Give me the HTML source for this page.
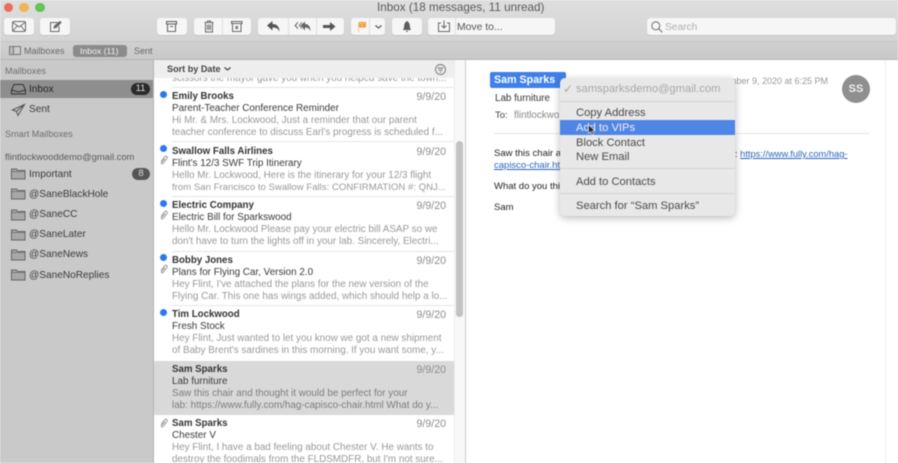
<!DOCTYPE html>
<html><head><meta charset="utf-8">
<style>
html,body{margin:0;padding:0;width:898px;height:463px;overflow:hidden;background:#fff}
body{font-family:"Liberation Sans",sans-serif;position:relative;color:#333}
#w{position:absolute;left:0;top:0;width:898px;height:463px;overflow:hidden;filter:blur(.4px)}
.a{position:absolute;white-space:nowrap}
.btn{position:absolute;top:18px;height:17px;background:#f6f6f6;border-radius:3px;box-shadow:0 .5px 1px rgba(0,0,0,.16)}
.div{position:absolute;top:18px;height:17px;width:1px;background:#dedede}
svg{position:absolute;overflow:visible}
.sb{font-size:10.1px;line-height:12px;color:#3a3a3a;margin-top:1px}
.hd{font-size:9.1px;line-height:12px;color:#6e6e6e}
.n{position:absolute;left:172px;margin-top:1px;font-size:9.7px;line-height:12px;font-weight:bold;color:#333;white-space:nowrap}
.s{position:absolute;left:172px;margin-top:1px;font-size:9.9px;line-height:12px;color:#3a3a3a;white-space:nowrap}
.p{position:absolute;left:172px;margin-top:1px;font-size:9.9px;line-height:12px;color:#999;white-space:nowrap}
.d{position:absolute;right:452px;margin-top:1px;font-size:10.6px;line-height:12px;color:#8c8c8c}
.sep{position:absolute;left:172px;width:282px;height:1px;background:#e6e6e6}
.dot{position:absolute;left:160px;width:7px;height:7px;border-radius:50%;background:#2f78ea}
.m{position:absolute;left:576px;font-size:11.2px;line-height:14px;color:#4a4a4a;white-space:nowrap}
.ms{position:absolute;left:560px;width:175px;height:1px;background:#d2d2d2}
.b{position:absolute;left:494px;font-size:9.5px;line-height:12px;color:#222;white-space:nowrap}
</style></head><body><div id="w">

<!-- toolbar -->
<div class="a" style="left:0;top:0;width:898px;height:41px;background:linear-gradient(#dedede,#d4d4d4)"></div>
<div class="a" style="left:0;top:41px;width:898px;height:18px;background:linear-gradient(#d0d0d0,#c9c9c9);border-top:1px solid #c4c4c4;box-sizing:border-box"></div>
<div class="a" style="left:0;top:59px;width:898px;height:1px;background:#b5b5b5"></div>
<div class="a" style="left:3.500px;top:2.700px;width:9.500px;height:9.500px;border-radius:50%;background:#ee6a5f"></div>
<div class="a" style="left:19px;top:2.700px;width:9.500px;height:9.500px;border-radius:50%;background:#f0b655"></div>
<div class="a" style="left:35px;top:2.700px;width:9.500px;height:9.500px;border-radius:50%;background:#61c454"></div>
<div class="a" style="left:377px;top:1px;font-size:11.7px;line-height:14px;color:#5a5a5a">Inbox (18 messages, 11 unread)</div>

<div class="btn" style="left:4px;width:30px"></div>
<svg style="left:12px;top:21px" width="14" height="11" fill="none" stroke="#666" stroke-width="1"><rect x=".5" y=".5" width="13" height="10" rx="1.5"/><path d="M1 1.500 7 6l6-4.500M1 10l4-5M13 10 9 5"/></svg>
<div class="btn" style="left:40px;width:30px"></div>
<svg style="left:50px;top:21px" width="12" height="11" fill="none" stroke="#666" stroke-width="1"><path d="M8 1.500H.5v9h8.500V5"/><path d="M4 7l.5-2L10 .5l1 1L6 6.500z" fill="#666"/></svg>

<div class="btn" style="left:157px;width:30px"></div>
<svg style="left:166px;top:21px" width="12" height="11" fill="none" stroke="#666" stroke-width="1.100"><rect x=".5" y=".5" width="10" height="2.500"/><path d="M1.500 3v7.500h8V3M4 5.500h3"/></svg>
<div class="btn" style="left:194px;width:57px"></div><div class="div" style="left:222px"></div>
<svg style="left:204px;top:20px" width="11" height="13" fill="none" stroke="#666" stroke-width="1"><path d="M.5 2.500h9M3.500 2.500V1h3v1.500M1.500 2.500v9.500h7V2.500"/><path d="M3.500 4.500V10M5 4.500V10M6.500 4.500V10" stroke-width=".9"/></svg>
<svg style="left:231px;top:21px" width="12" height="11" fill="none" stroke="#666" stroke-width="1"><path d="M.5.500h10.500v2H.5zM1.500 2.500v8h8.500v-8"/><path d="M4.500 5l2.500 3M7 5 4.500 8"/></svg>
<div class="btn" style="left:258px;width:86px"></div><div class="div" style="left:288px"></div><div class="div" style="left:316px"></div>
<svg style="left:267px;top:21px" width="13" height="11" fill="#555"><path d="M0 4.500 5.500 0v3C10 3 12.500 6 12.500 10.500 11 7.500 9 6.500 5.500 6.500V9.500z"/></svg>
<svg style="left:294px;top:21px" width="17" height="11" fill="#666"><path d="M4 .5.500 4.500 4 8.500V7L2 4.500 4 2z"/><path d="M8 .5 4.500 4.500 8 8.500V7L6 4.500 8 2z" opacity=".8"/><path d="M6.500 4.500 11 .5v2.500c3.500 0 5.500 3 5.500 7-1.200-2.500-3-3.500-5.500-3.500v3z"/></svg>
<svg style="left:323px;top:22px" width="13" height="9" fill="#555"><path d="M0 3h7V0l5.500 4.500L7 9V6H0z"/></svg>
<div class="btn" style="left:351px;width:34px"></div><div class="div" style="left:369px"></div>
<svg style="left:358px;top:22px" width="8" height="10"><path d="M0 0h8v5.500H1V10H0z" fill="#f2cf91"/><path d="M1 0h7v5.500H1z" fill="#ee9d3d"/><path d="M2 1h1.500v1H2zM5 1h1.500v1H5zM3.500 3H5v1H3.500z" fill="#f6e2b8"/></svg>
<svg style="left:375px;top:25px" width="7" height="4" fill="none" stroke="#555" stroke-width="1.200"><path d="M.5.500 3.500 3 6.500.5"/></svg>
<div class="btn" style="left:392px;width:30px"></div>
<svg style="left:403px;top:21px" width="8" height="12" fill="#5e5e5e"><path d="M4 0c.7 0 .9.500.9 1C6.500 1.700 6.700 3.500 6.900 5.500c.1 1.500.7 2.500 1.100 3.500H0c.4-1 1-2 1.100-3.500C1.300 3.500 1.500 1.700 3.100 1 3.100.5 3.300 0 4 0zM2.800 9.700h2.400C5 11.200 3 11.200 2.800 9.700z"/></svg>
<div class="btn" style="left:428px;width:127px"></div><div class="div" style="left:455px"></div>
<svg style="left:438px;top:20px" width="12" height="13" fill="none" stroke="#666" stroke-width="1"><path d="M3 3H.5v8.500h11V3H9M6 .5v7.500M3.500 5.500 6 8l2.500-2.500"/></svg>
<div class="a" style="left:457px;top:20px;margin-top:1px;font-size:10.400px;line-height:14px;color:#555">Move to...</div>
<div class="btn" style="left:647px;width:249px"></div>
<svg style="left:651px;top:21px" width="12" height="12" fill="none" stroke="#777" stroke-width="1.100"><circle cx="4.800" cy="4.800" r="4"/><path d="M7.800 7.800l3.500 3.500"/></svg>
<div class="a" style="left:665px;top:21px;font-size:10.200px;line-height:14px;color:#b0b0b0">Search</div>

<!-- fav bar -->
<svg style="left:9px;top:46px" width="12" height="9" fill="none" stroke="#777" stroke-width="1"><rect x=".5" y=".5" width="11" height="8"/><path d="M4.500.5v8"/><path d="M.5.500h4v8h-4z" fill="#bbb"/></svg>
<div class="a" style="left:24px;top:44.500px;font-size:9px;line-height:12px;color:#666">Mailboxes</div>
<div class="a" style="left:73px;top:44.500px;width:54px;height:12.500px;background:#8b8b8b;border-radius:3px"></div>
<div class="a" style="left:80px;top:44.500px;font-size:8.700px;line-height:12px;color:#f2f2f2">Inbox (11)</div>
<div class="a" style="left:134px;top:44.500px;font-size:9px;line-height:12px;color:#666">Sent</div>

<!-- sidebar -->
<div class="a" style="left:0;top:60px;width:154px;height:403px;background:#c9c9c9"></div>
<div class="a" style="left:153px;top:60px;width:1px;height:403px;background:#b4b4b4"></div>
<div class="a hd" style="left:5px;top:65px">Mailboxes</div>
<div class="a" style="left:0;top:80px;width:153px;height:18px;background:#8e8e8e"></div>
<svg style="left:11px;top:83px" width="15" height="12" fill="none" stroke="#333" stroke-width="1"><path d="M.5 7 3 1.500h9L14.500 7v4H.5z"/><path d="M.5 7 7.500 9l7-2"/></svg>
<div class="a sb" style="left:29px;top:83px;color:#222">Inbox</div>
<div class="a" style="left:131px;top:83px;width:19px;height:12px;border-radius:6px;background:#2a2a2a;color:#ddd;font-size:9.500px;line-height:12px;text-align:center">11</div>
<svg style="left:12px;top:104px" width="13" height="12" fill="none" stroke="#555" stroke-width="1"><path d="M12.500.5.500 6l4 1.500 1.500 4L12.500.5zM4.500 7.500 12.500.5"/></svg>
<div class="a sb" style="left:29px;top:103px">Sent</div>
<div class="a hd" style="left:5px;top:128px">Smart Mailboxes</div>
<div class="a" style="left:5px;top:151px;font-size:9.400px;line-height:12px;color:#5a5a5a">flintlockwooddemo@gmail.com</div>
<svg width="0" height="0"><defs><g id="f"><path d="M.5 2V1h5l1 1.500h7.500V11H.5z" fill="#a8a8a8" stroke="#666"/><path d="M.5 3.500H14" stroke="#666" stroke-width=".7"/></g></defs></svg>
<svg style="left:11px;top:168px" width="15" height="12"><use href="#f"/></svg>
<div class="a sb" style="left:29px;top:168px">Important</div>
<div class="a" style="left:132px;top:168px;width:18px;height:12px;border-radius:6px;background:#555;color:#ddd;font-size:9.500px;line-height:12px;text-align:center">8</div>
<svg style="left:11px;top:188px" width="15" height="12"><use href="#f"/></svg>
<div class="a sb" style="left:29px;top:188px">@SaneBlackHole</div>
<svg style="left:11px;top:209px" width="15" height="12"><use href="#f"/></svg>
<div class="a sb" style="left:29px;top:208px">@SaneCC</div>
<svg style="left:11px;top:229px" width="15" height="12"><use href="#f"/></svg>
<div class="a sb" style="left:29px;top:228px">@SaneLater</div>
<svg style="left:11px;top:249px" width="15" height="12"><use href="#f"/></svg>
<div class="a sb" style="left:29px;top:248px">@SaneNews</div>
<svg style="left:11px;top:269px" width="15" height="12"><use href="#f"/></svg>
<div class="a sb" style="left:29px;top:269px">@SaneNoReplies</div>

<!-- list -->
<div class="a" style="left:154px;top:361px;width:300px;height:54px;background:#d9d9d9"></div>
<div class="p" style="top:72px">scissors the mayor gave you when you helped save the town...</div>
<div class="a" style="left:154px;top:60px;width:300px;height:18px;background:#eeeeee"></div>
<div class="a" style="left:167px;top:63px;font-size:9.100px;line-height:12px;font-weight:bold;color:#444">Sort by Date</div>
<svg style="left:224px;top:67px" width="7" height="4" fill="none" stroke="#444" stroke-width="1.200"><path d="M.5.500 3.500 3 6.500.5"/></svg>
<svg style="left:435px;top:64px" width="11" height="11" fill="none" stroke="#777" stroke-width=".9"><circle cx="5.500" cy="5.500" r="5"/><path d="M2.500 4h6M3.500 6h4M4.800 8h1.500"/></svg>

<div class="sep" style="top:87px"></div>
<div class="dot" style="top:91px"></div>
<div class="n" style="top:90px">Emily Brooks</div><div class="d" style="top:90px">9/9/20</div>
<div class="s" style="top:102px">Parent-Teacher Conference Reminder</div>
<div class="p" style="top:114px">Hi Mr. &amp; Mrs. Lockwood, Just a reminder that our parent</div>
<div class="p" style="top:126px">teacher conference to discuss Earl's progress is scheduled f...</div>

<div class="sep" style="top:141px"></div>
<div class="dot" style="top:145px"></div>
<svg style="left:160px;top:155px" width="8" height="10" fill="none" stroke="#999" stroke-width="1"><path d="M1 6.500 5 1.500c1-1 3 .5 2 2L3 8.500c-.7.800-2.200 0-1.500-1L5 3.500"/></svg>
<div class="n" style="top:145px">Swallow Falls Airlines</div><div class="d" style="top:145px">9/9/20</div>
<div class="s" style="top:157px">Flint's 12/3 SWF Trip Itinerary</div>
<div class="p" style="top:169px">Hello Mr. Lockwood, Here is the itinerary for your 12/3 flight</div>
<div class="p" style="top:181px;font-size:9.6px">from San Francisco to Swallow Falls: CONFIRMATION #: QNJ...</div>

<div class="sep" style="top:196px"></div>
<div class="dot" style="top:200px"></div>
<svg style="left:160px;top:210px" width="8" height="10" fill="none" stroke="#999" stroke-width="1"><path d="M1 6.500 5 1.500c1-1 3 .5 2 2L3 8.500c-.7.800-2.200 0-1.500-1L5 3.500"/></svg>
<div class="n" style="top:199px">Electric Company</div><div class="d" style="top:199px">9/9/20</div>
<div class="s" style="top:211px">Electric Bill for Sparkswood</div>
<div class="p" style="top:223px">Hello Mr. Lockwood Please pay your electric bill ASAP so we</div>
<div class="p" style="top:235px">don't have to turn the lights off in your lab. Sincerely, Electri...</div>

<div class="sep" style="top:251px"></div>
<div class="dot" style="top:254px"></div>
<svg style="left:160px;top:264px" width="8" height="10" fill="none" stroke="#999" stroke-width="1"><path d="M1 6.500 5 1.500c1-1 3 .5 2 2L3 8.500c-.7.800-2.200 0-1.500-1L5 3.500"/></svg>
<div class="n" style="top:254px">Bobby Jones</div><div class="d" style="top:254px">9/9/20</div>
<div class="s" style="top:266px">Plans for Flying Car, Version 2.0</div>
<div class="p" style="top:278px">Hey Flint, I've attached the plans for the new version of the</div>
<div class="p" style="top:290px">Flying Car. This one has wings added, which should help a lo...</div>

<div class="sep" style="top:305px"></div>
<div class="dot" style="top:309px"></div>
<div class="n" style="top:308px">Tim Lockwood</div><div class="d" style="top:308px">9/9/20</div>
<div class="s" style="top:320px">Fresh Stock</div>
<div class="p" style="top:332px">Hey Flint, Just wanted to let you know we got a new shipment</div>
<div class="p" style="top:344px">of Baby Brent's sardines in this morning. If you want some, y...</div>

<div class="n" style="top:363px">Sam Sparks</div><div class="d" style="top:363px">9/9/20</div>
<div class="s" style="top:375px">Lab furniture</div>
<div class="p" style="top:387px;color:#7d7d7d">Saw this chair and thought it would be perfect for your</div>
<div class="p" style="top:399px;color:#7d7d7d">lab: https://www.fully.com/hag-capisco-chair.html What do y...</div>

<svg style="left:160px;top:418px" width="8" height="10" fill="none" stroke="#999" stroke-width="1"><path d="M1 6.500 5 1.500c1-1 3 .5 2 2L3 8.500c-.7.800-2.200 0-1.500-1L5 3.500"/></svg>
<div class="n" style="top:417px">Sam Sparks</div><div class="d" style="top:417px">9/9/20</div>
<div class="s" style="top:429px">Chester V</div>
<div class="p" style="top:441px">Hey Flint, I have a bad feeling about Chester V. He wants to</div>
<div class="p" style="top:453px">destroy the foodimals from the FLDSMDFR, but I'm not sure...</div>

<!-- scrollbar -->
<div class="a" style="left:454px;top:60px;width:11px;height:403px;background:#f8f8f8;border-left:1px solid #ececec;box-sizing:border-box"></div>
<div class="a" style="left:456px;top:141px;width:7px;height:176px;border-radius:4px;background:#c2c2c2"></div>
<div class="a" style="left:465px;top:60px;width:1px;height:403px;background:#cfcfcf"></div>
<div class="a" style="left:885px;top:60px;width:1px;height:403px;background:#f0f0f0"></div>

<!-- detail -->
<div class="a" style="left:490px;top:72px;width:76px;height:16px;background:#3f80ea;border-radius:2px"></div>
<div class="a" style="left:494px;top:73px;font-size:10.700px;line-height:14px;font-weight:bold;color:#fff">Sam Sparks</div>
<div class="a" style="left:495px;top:93px;font-size:9.800px;line-height:12px;color:#333">Lab furniture</div>
<div class="a" style="left:495px;top:110px;font-size:9.500px;line-height:12px;color:#444">To:</div>
<div class="a" style="left:514px;top:110px;font-size:9.800px;line-height:12px;color:#888">flintlockwo</div>
<div class="a" style="right:70px;top:75px;font-size:9px;line-height:12px;color:#999">ember 9, 2020 at 6:25 PM</div>
<div class="a" style="left:842px;top:75px;width:28px;height:28px;border-radius:50%;background:#8f8f8f;color:#eee;font-size:11px;font-weight:bold;line-height:28px;text-align:center">SS</div>
<div class="a" style="left:494px;top:133px;width:376px;height:1px;background:#e4e4e4"></div>
<div class="b" style="top:148px">Saw this chair a</div>
<div class="b" style="top:148px;left:735px;font-size:9.300px">: <span style="color:#2a66b8;text-decoration:underline">https://www.fully.com/hag-</span></div>
<div class="b" style="top:160px;color:#2a66b8;text-decoration:underline">capisco-chair.htm</div>
<div class="b" style="top:181px">What do you thi</div>
<div class="b" style="top:202px">Sam</div>

<!-- menu -->
<div class="a" style="left:560px;top:78px;width:175px;height:138px;background:#e8e8e8;border-radius:5px;box-shadow:0 2px 8px rgba(0,0,0,.28)"></div>
<div class="a" style="left:563px;top:82px;font-size:12px;line-height:14px;color:#aaa">✓</div>
<div class="m" style="top:82px;color:#a8a8a8">samsparksdemo@gmail.com</div>
<div class="ms" style="top:101px"></div>
<div class="m" style="top:106px">Copy Address</div>
<div class="a" style="left:560px;top:120px;width:175px;height:14.500px;background:#4f86e6"></div>
<div class="m" style="top:121px;color:#f0f0f0">Add to VIPs</div>
<div class="m" style="top:136px">Block Contact</div>
<div class="m" style="top:150px">New Email</div>
<div class="ms" style="top:168px"></div>
<div class="m" style="top:175px">Add to Contacts</div>
<div class="ms" style="top:193px"></div>
<div class="m" style="top:199px">Search for “Sam Sparks”</div>
<svg style="left:588px;top:124px" width="8" height="12"><path d="M.5.500v9l2.200-2 1.500 3.500 1.500-.7L4.200 7H7z" fill="#222" stroke="#eee" stroke-width=".6"/></svg>
</div></body></html>
